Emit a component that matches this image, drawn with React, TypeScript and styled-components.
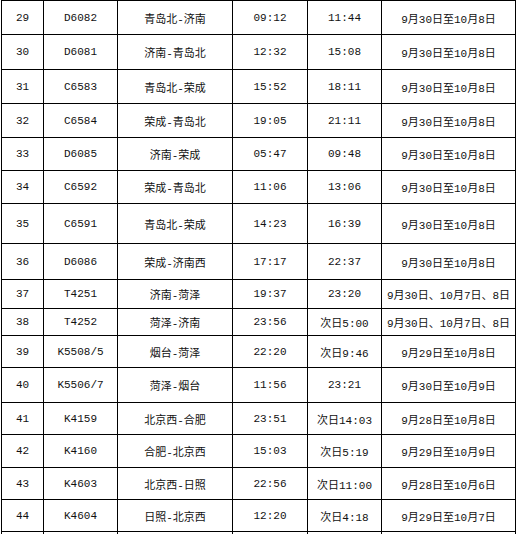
import { FC } from 'react';
import styled, { createGlobalStyle } from 'styled-components';

const GlobalStyle = createGlobalStyle`
  html, body {
    margin: 0;
    padding: 0;
    background: #ffffff;
  }
`;

interface ITrain {
  no: number;
  code: string;
  route: string;
  depart: string;
  arrive: string;
  dates: string;
  height: number;
}

// row heights measured from the printed schedule (inner cell height)
const trains: ITrain[] = [
  { no: 29, code: 'D6082', route: '青岛北-济南', depart: '09:12', arrive: '11:44', dates: '9月30日至10月8日', height: 33 },
  { no: 30, code: 'D6081', route: '济南-青岛北', depart: '12:32', arrive: '15:08', dates: '9月30日至10月8日', height: 34 },
  { no: 31, code: 'C6583', route: '青岛北-荣成', depart: '15:52', arrive: '18:11', dates: '9月30日至10月8日', height: 33 },
  { no: 32, code: 'C6584', route: '荣成-青岛北', depart: '19:05', arrive: '21:11', dates: '9月30日至10月8日', height: 33 },
  { no: 33, code: 'D6085', route: '济南-荣成', depart: '05:47', arrive: '09:48', dates: '9月30日至10月8日', height: 32 },
  { no: 34, code: 'C6592', route: '荣成-青岛北', depart: '11:06', arrive: '13:06', dates: '9月30日至10月8日', height: 32 },
  { no: 35, code: 'C6591', route: '青岛北-荣成', depart: '14:23', arrive: '16:39', dates: '9月30日至10月8日', height: 39 },
  { no: 36, code: 'D6086', route: '荣成-济南西', depart: '17:17', arrive: '22:37', dates: '9月30日至10月8日', height: 35 },
  { no: 37, code: 'T4251', route: '济南-菏泽', depart: '19:37', arrive: '23:20', dates: '9月30日、10月7日、8日', height: 28 },
  { no: 38, code: 'T4252', route: '菏泽-济南', depart: '23:56', arrive: '次日5:00', dates: '9月30日、10月7日、8日', height: 26 },
  { no: 39, code: 'K5508/5', route: '烟台-菏泽', depart: '22:20', arrive: '次日9:46', dates: '9月29日至10月8日', height: 31 },
  { no: 40, code: 'K5506/7', route: '菏泽-烟台', depart: '11:56', arrive: '23:21', dates: '9月30日至10月9日', height: 34 },
  { no: 41, code: 'K4159', route: '北京西-合肥', depart: '23:51', arrive: '次日14:03', dates: '9月28日至10月8日', height: 31 },
  { no: 42, code: 'K4160', route: '合肥-北京西', depart: '15:03', arrive: '次日5:19', dates: '9月29日至10月9日', height: 32 },
  { no: 43, code: 'K4603', route: '北京西-日照', depart: '22:56', arrive: '次日11:00', dates: '9月28日至10月6日', height: 31 },
  { no: 44, code: 'K4604', route: '日照-北京西', depart: '12:20', arrive: '次日4:18', dates: '9月29日至10月7日', height: 31 },
];

const Sheet = styled.div`
  margin-left: 1px;
  width: 513px;
  display: grid;
  grid-template-columns: 41px 73px 114px 74px 73px 133px;
  gap: 1px;
  padding: 1px;
  background: #000000;
  font-family: 'Liberation Mono', 'Noto Sans CJK SC', monospace;
  font-size: 11px;
  color: #111111;
`;

const Cell = styled.div<{ $h: number }>`
  height: ${p => p.$h}px;
  background: #ffffff;
  display: flex;
  align-items: center;
  justify-content: center;
  white-space: nowrap;
  overflow: hidden;
`;

const Row: FC<{ train: ITrain }> = ({ train }) => (
  <>
    <Cell $h={train.height}>{train.no}</Cell>
    <Cell $h={train.height}>{train.code}</Cell>
    <Cell $h={train.height}>{train.route}</Cell>
    <Cell $h={train.height}>{train.depart}</Cell>
    <Cell $h={train.height}>{train.arrive}</Cell>
    <Cell $h={train.height}>{train.dates}</Cell>
  </>
);

export default function App() {
  return (
    <>
      <GlobalStyle />
      <Sheet>
        {trains.map(t => (
          <Row key={t.no} train={t} />
        ))}
        {[0, 1, 2, 3, 4, 5].map(i => (
          <Cell key={i} $h={31} />
        ))}
      </Sheet>
    </>
  );
}
